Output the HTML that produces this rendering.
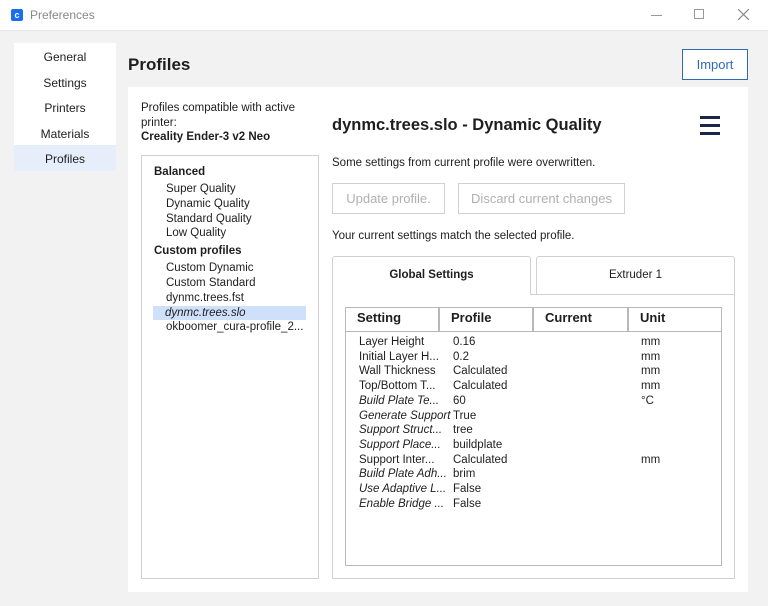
<!DOCTYPE html>
<html><head><meta charset="utf-8"><style>
*{margin:0;padding:0;box-sizing:border-box}
body{width:768px;height:606px;overflow:hidden;background:#f2f2f2;font-family:"Liberation Sans","DejaVu Sans",sans-serif;font-size:11.5px;color:#1e1e1e;position:relative}
.a{position:absolute;white-space:nowrap}
.tb{left:0;top:0;width:768px;height:31px;background:#fff;border-bottom:1px solid #e6e6e6}
.nav{left:14px;top:43px;width:102px;height:128px;background:#fff}
.nav div{height:25.5px;line-height:28px;text-align:center;font-size:12px}
.panel{left:128px;top:87px;width:620px;height:505px;background:#fff}
.btn{border:1px solid #d0d0d0;color:#b0b0b0;font-size:13px;text-align:center}
.list{left:141px;top:155px;width:178px;height:424px;border:1px solid #d0d0d0}
.row{height:14.8px;line-height:14.8px}
.tab{border:1px solid #d0d0d0;border-bottom:none;border-radius:3px 3px 0 0;text-align:center;line-height:36px;font-size:11.5px;background:#fff}
.hd{top:307px;height:25px;border:1px solid #b8b8b8;font-weight:bold;font-size:13px;line-height:20px;padding-left:11px}
</style></head><body>
<div class="a tb"></div>
<div class="a" style="left:11px;top:9px;width:12px;height:12px;background:#196ef0;border-radius:2px;color:#fff;font-size:9px;font-weight:bold;text-align:center;line-height:12px">c</div>
<div class="a" style="left:30px;top:8px;font-size:12px;color:#888">Preferences</div>
<div class="a" style="left:651px;top:15px;width:11px;height:1px;background:#999"></div>
<div class="a" style="left:694px;top:9px;width:10px;height:10px;border:1px solid #999"></div>
<svg class="a" style="left:738px;top:9px" width="11" height="11"><path d="M0 0L11 11M11 0L0 11" stroke="#888" stroke-width="1.2"/></svg>
<div class="a nav"><div>General</div><div>Settings</div><div>Printers</div><div>Materials</div><div style="background:#e6eefb">Profiles</div></div>
<div class="a" style="left:128px;top:55px;font-size:17px;font-weight:bold">Profiles</div>
<div class="a" style="left:682px;top:49px;width:66px;height:31px;border:1px solid #2f6bb5;background:#fff;color:#2f6bb5;font-size:13px;text-align:center;line-height:30px">Import</div>
<div class="a panel"></div>
<div class="a" style="left:141px;top:101px;line-height:14.5px">Profiles compatible with active<br>printer:<br><b>Creality Ender-3 v2 Neo</b></div>
<div class="a list"></div>
<div class="a" style="left:154px;top:165px">
<div class="row" style="font-weight:bold;height:17px">Balanced</div>
<div class="row" style="padding-left:12px">Super Quality</div>
<div class="row" style="padding-left:12px">Dynamic Quality</div>
<div class="row" style="padding-left:12px">Standard Quality</div>
<div class="row" style="padding-left:12px">Low Quality</div>
<div class="row" style="font-weight:bold;height:20px;line-height:20px">Custom profiles</div>
<div class="row" style="padding-left:12px">Custom Dynamic</div>
<div class="row" style="padding-left:12px">Custom Standard</div>
<div class="row" style="padding-left:12px">dynmc.trees.fst</div>
<div class="row" style="padding-left:12px;background:#cfe0fa;width:153px;margin-left:-1px;font-style:italic">dynmc.trees.slo</div>
<div class="row" style="padding-left:12px">okboomer_cura-profile_2...</div>
</div>
<div class="a" style="left:332px;top:116px;font-size:16.5px;font-weight:bold">dynmc.trees.slo - Dynamic Quality</div>
<div class="a" style="left:700px;top:116px;width:20px;height:3px;background:#1e2448"></div>
<div class="a" style="left:700px;top:124px;width:20px;height:3px;background:#1e2448"></div>
<div class="a" style="left:700px;top:132px;width:20px;height:3px;background:#1e2448"></div>
<div class="a" style="left:332px;top:157px">Some settings from current profile were overwritten.</div>
<div class="a btn" style="left:332px;top:183px;width:113px;height:31px;line-height:30px">Update profile.</div>
<div class="a btn" style="left:458px;top:183px;width:167px;height:31px;line-height:30px">Discard current changes</div>
<div class="a" style="left:332px;top:230px">Your current settings match the selected profile.</div>
<div class="a" style="left:332px;top:294px;width:403px;height:285px;border:1px solid #d0d0d0"></div>
<div class="a tab" style="left:332px;top:256px;width:199px;height:39px;font-weight:bold">Global Settings</div>
<div class="a tab" style="left:536px;top:256px;width:199px;height:38px">Extruder 1</div>
<div class="a" style="left:345px;top:307px;width:377px;height:259px;border:1px solid #b8b8b8"></div>
<div class="a hd" style="left:345px;width:94px">Setting</div>
<div class="a hd" style="left:439px;width:94px">Profile</div>
<div class="a hd" style="left:533px;width:95px">Current</div>
<div class="a hd" style="left:628px;width:94px">Unit</div>
<div class="a" style="left:359px;top:335px;line-height:14.7px">Layer Height<br>Initial Layer H...<br>Wall Thickness<br>Top/Bottom T...<br><i>Build Plate Te...</i><br><i>Generate Support</i><br><i>Support Struct...</i><br><i>Support Place...</i><br>Support Inter...<br><i>Build Plate Adh...</i><br><i>Use Adaptive L...</i><br><i>Enable Bridge ...</i></div>
<div class="a" style="left:453px;top:335px;line-height:14.7px">0.16<br>0.2<br>Calculated<br>Calculated<br>60<br>True<br>tree<br>buildplate<br>Calculated<br>brim<br>False<br>False</div>
<div class="a" style="left:641px;top:335px;line-height:14.7px">mm<br>mm<br>mm<br>mm<br>°C<br><br><br><br>mm</div>
</body></html>
